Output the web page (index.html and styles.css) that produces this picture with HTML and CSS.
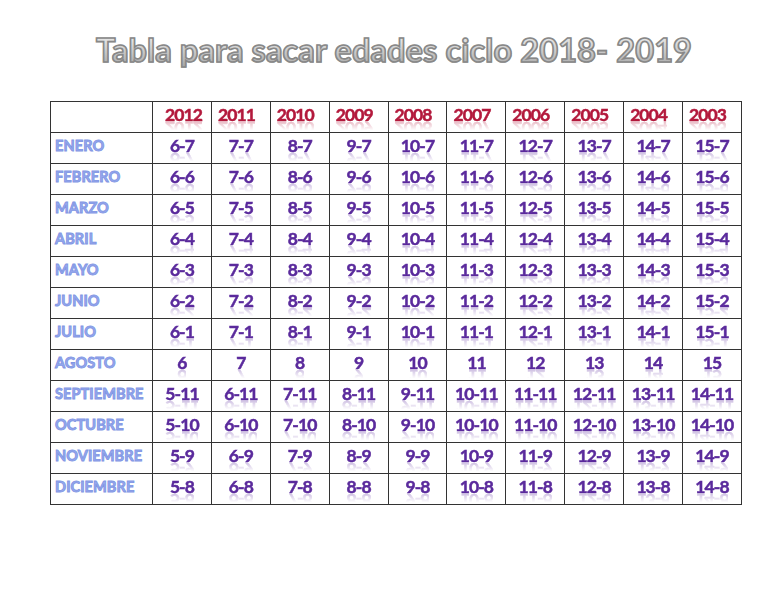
FILE: index.html
```html
<!DOCTYPE html>
<html lang="es">
<head>
<meta charset="utf-8">
<title>Tabla para sacar edades ciclo 2018- 2019</title>
<link rel="stylesheet" href="styles.css">
</head>
<body>
<h1 class="title"><span class="title-text">Tabla para sacar edades ciclo 2018- 2019</span></h1>
<table class="ages">
<thead>
<tr><th class="corner"></th><th class="yr first"><span>2012</span></th><th class="yr"><span>2011</span></th><th class="yr"><span>2010</span></th><th class="yr"><span>2009</span></th><th class="yr"><span>2008</span></th><th class="yr"><span>2007</span></th><th class="yr"><span>2006</span></th><th class="yr"><span>2005</span></th><th class="yr"><span>2004</span></th><th class="yr"><span>2003</span></th></tr>
</thead>
<tbody>
<tr><th class="mo"><span>ENERO</span></th><td><span>6-7</span></td><td><span>7-7</span></td><td><span>8-7</span></td><td><span>9-7</span></td><td><span>10-7</span></td><td><span>11-7</span></td><td><span>12-7</span></td><td><span>13-7</span></td><td><span>14-7</span></td><td><span>15-7</span></td></tr>
<tr><th class="mo"><span>FEBRERO</span></th><td><span>6-6</span></td><td><span>7-6</span></td><td><span>8-6</span></td><td><span>9-6</span></td><td><span>10-6</span></td><td><span>11-6</span></td><td><span>12-6</span></td><td><span>13-6</span></td><td><span>14-6</span></td><td><span>15-6</span></td></tr>
<tr><th class="mo"><span>MARZO</span></th><td><span>6-5</span></td><td><span>7-5</span></td><td><span>8-5</span></td><td><span>9-5</span></td><td><span>10-5</span></td><td><span>11-5</span></td><td><span>12-5</span></td><td><span>13-5</span></td><td><span>14-5</span></td><td><span>15-5</span></td></tr>
<tr><th class="mo"><span>ABRIL</span></th><td><span>6-4</span></td><td><span>7-4</span></td><td><span>8-4</span></td><td><span>9-4</span></td><td><span>10-4</span></td><td><span>11-4</span></td><td><span>12-4</span></td><td><span>13-4</span></td><td><span>14-4</span></td><td><span>15-4</span></td></tr>
<tr><th class="mo"><span>MAYO</span></th><td><span>6-3</span></td><td><span>7-3</span></td><td><span>8-3</span></td><td><span>9-3</span></td><td><span>10-3</span></td><td><span>11-3</span></td><td><span>12-3</span></td><td><span>13-3</span></td><td><span>14-3</span></td><td><span>15-3</span></td></tr>
<tr><th class="mo"><span>JUNIO</span></th><td><span>6-2</span></td><td><span>7-2</span></td><td><span>8-2</span></td><td><span>9-2</span></td><td><span>10-2</span></td><td><span>11-2</span></td><td><span>12-2</span></td><td><span>13-2</span></td><td><span>14-2</span></td><td><span>15-2</span></td></tr>
<tr><th class="mo"><span>JULIO</span></th><td><span>6-1</span></td><td><span>7-1</span></td><td><span>8-1</span></td><td><span>9-1</span></td><td><span>10-1</span></td><td><span>11-1</span></td><td><span>12-1</span></td><td><span>13-1</span></td><td><span>14-1</span></td><td><span>15-1</span></td></tr>
<tr><th class="mo"><span>AGOSTO</span></th><td><span>6</span></td><td><span>7</span></td><td><span>8</span></td><td><span>9</span></td><td><span>10</span></td><td><span>11</span></td><td><span>12</span></td><td><span>13</span></td><td><span>14</span></td><td><span>15</span></td></tr>
<tr><th class="mo"><span>SEPTIEMBRE</span></th><td><span>5-11</span></td><td><span>6-11</span></td><td><span>7-11</span></td><td><span>8-11</span></td><td><span>9-11</span></td><td><span>10-11</span></td><td><span>11-11</span></td><td><span>12-11</span></td><td><span>13-11</span></td><td><span>14-11</span></td></tr>
<tr><th class="mo"><span>OCTUBRE</span></th><td><span>5-10</span></td><td><span>6-10</span></td><td><span>7-10</span></td><td><span>8-10</span></td><td><span>9-10</span></td><td><span>10-10</span></td><td><span>11-10</span></td><td><span>12-10</span></td><td><span>13-10</span></td><td><span>14-10</span></td></tr>
<tr><th class="mo"><span>NOVIEMBRE</span></th><td><span>5-9</span></td><td><span>6-9</span></td><td><span>7-9</span></td><td><span>8-9</span></td><td><span>9-9</span></td><td><span>10-9</span></td><td><span>11-9</span></td><td><span>12-9</span></td><td><span>13-9</span></td><td><span>14-9</span></td></tr>
<tr><th class="mo"><span>DICIEMBRE</span></th><td><span>5-8</span></td><td><span>6-8</span></td><td><span>7-8</span></td><td><span>8-8</span></td><td><span>9-8</span></td><td><span>10-8</span></td><td><span>11-8</span></td><td><span>12-8</span></td><td><span>13-8</span></td><td><span>14-8</span></td></tr>
</tbody>
</table>
</body>
</html>
```
FILE: styles.css
```css
html, body {
  margin: 0;
  padding: 0;
  background: #ffffff;
}
body {
  font-family: Lato, "Open Sans", "DejaVu Sans", sans-serif;
  padding-top: 30px;
}
.title {
  margin: 0;
  height: 71px;
  text-align: center;
  font-size: 32.5px;
  font-weight: 700;
  line-height: 40px;
  padding-left: 20px;
}
.title-text {
  display: inline-block;
  letter-spacing: 0.1px;
  background: linear-gradient(180deg, #f6f6f6 0%, #d6d6d6 40%, #a0a0a0 100%);
  -webkit-background-clip: text;
  background-clip: text;
  color: transparent;
  -webkit-text-stroke: 1.6px #888888;
}
.ages {
  margin-left: 50px;
  border-collapse: collapse;
  table-layout: fixed;
  width: 692px;
}
.ages th, .ages td {
  border: 1px solid #333333;
  height: 31px;
  padding: 0 0 5px 0;
  box-sizing: border-box;
  vertical-align: middle;
  font-weight: 700;
  white-space: nowrap;
}
.ages .corner {
  width: 102px;
}
.yr {
  text-align: left;
  padding-left: 6px !important;
  color: #b3193c;
  font-size: 17.5px;
  letter-spacing: -0.9px;
  -webkit-text-stroke: 0.5px #b3193c;
}
.yr.first {
  padding-left: 12px !important;
}
.mo {
  text-align: left;
  padding-left: 4px !important;
  color: #98aaee;
  font-size: 14.5px;
  letter-spacing: 0.1px;
  -webkit-text-stroke: 0.9px #8196e4;
}
.ages td {
  text-align: center;
  color: #5a2a9c;
  font-size: 17.5px;
  letter-spacing: -0.9px;
  -webkit-text-stroke: 0.5px #5a2a9c;
}
.ages td span, .yr span {
  display: inline-block;
  line-height: 16px;
  -webkit-box-reflect: below -3px linear-gradient(transparent 35%, rgba(255,255,255,0.35));
}
```
